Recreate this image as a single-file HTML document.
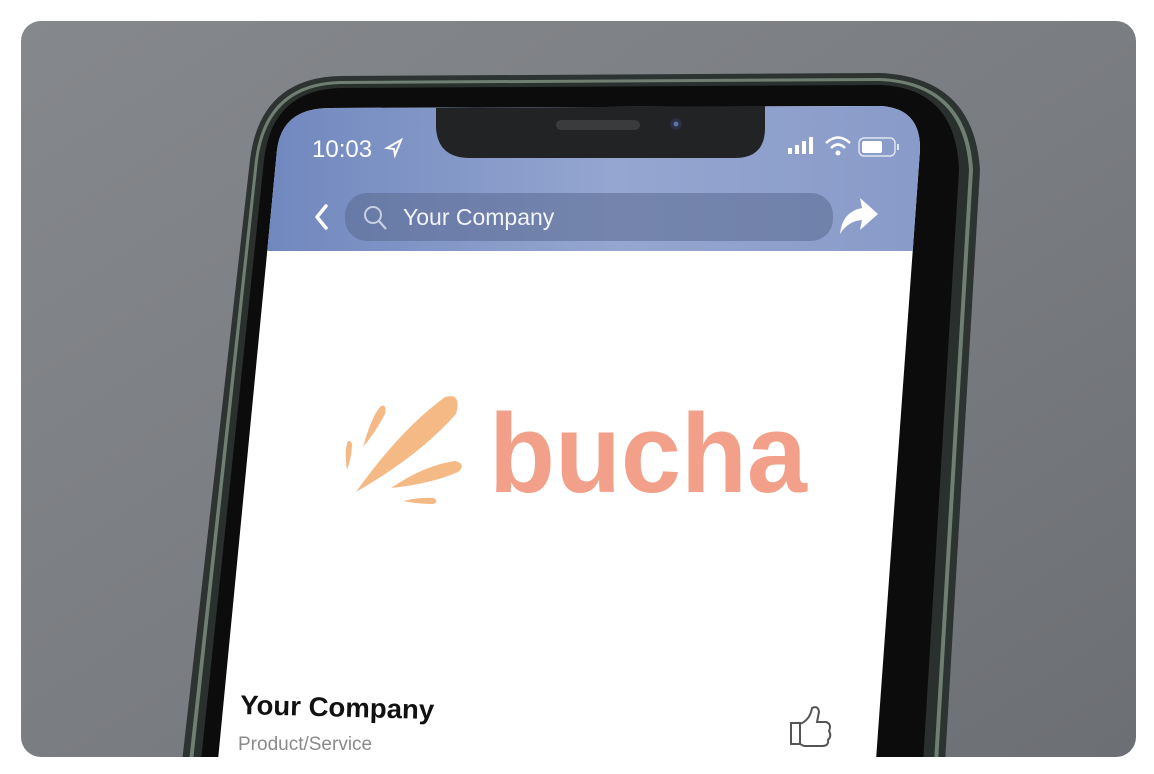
<!DOCTYPE html>
<html><head><style>
html,body{margin:0;padding:0;background:#fff;width:1154px;height:774px;overflow:hidden}
svg{display:block}
text{font-family:"Liberation Sans",sans-serif}
</style></head><body>
<svg width="1154" height="774" viewBox="0 0 1154 774">
<defs>
<linearGradient id="bg" x1="0" y1="0" x2="1" y2="1">
<stop offset="0" stop-color="#85888c"/><stop offset="0.5" stop-color="#7a7d81"/><stop offset="1" stop-color="#6c6f73"/>
</linearGradient>
<linearGradient id="blue" x1="0" y1="0" x2="1" y2="0">
<stop offset="0" stop-color="#6a82bb"/><stop offset="0.55" stop-color="#95a6d0"/><stop offset="1" stop-color="#8799c8"/>
</linearGradient>
<clipPath id="card"><rect x="21" y="21" width="1115" height="736" rx="20"/></clipPath>
<clipPath id="scr"><path d="M277,150 Q282,108 330,108 L880,106 Q921,108 920,150 L876,760 L218,760 Z"/></clipPath>
</defs>
<rect x="21" y="21" width="1115" height="736" rx="20" fill="url(#bg)"/>
<g clip-path="url(#card)">
<!-- phone frame -->
<path d="M250,160 Q260,78 340,76 L880,73 Q974,77 980,170 L944,780 L180,780 Z" fill="#2c3330"/>
<path d="M255,160 Q265,83 340,81 L880,78 Q968,82 973,170 L937,780 L187,780 Z" fill="#6f7f72"/>
<path d="M258,160 Q268,86 340,84 L880,81 Q964,85 969,170 L933,780 L191,780 Z" fill="#2a302d"/>
<path d="M264,160 Q272,90 340,88 L880,85 Q956,88 959,170 L922,780 L199,780 Z" fill="#0c0c0c"/>
<g clip-path="url(#scr)">
<rect x="200" y="100" width="760" height="680" fill="#fff"/>
<rect x="200" y="100" width="760" height="151" fill="url(#blue)"/>
<rect x="345" y="193" width="488" height="48" rx="22" fill="#5a6a90" opacity="0.55"/>
</g>
<!-- notch -->
<path d="M436,108 L436,128 Q438,158 470,158 L735,158 Q765,158 765,128 L765,106 Z" fill="#222324"/>
<rect x="556" y="120" width="84" height="10" rx="5" fill="#3a3b3c"/>
<circle cx="676" cy="124" r="6" fill="#2b3040"/><circle cx="676" cy="124" r="2.5" fill="#5a70a8"/>
<!-- status -->
<text x="312" y="157" font-size="24" fill="#fff">10:03</text>
<path d="M387,148 L401,140 L395,155 L394,149 Z" fill="none" stroke="#fff" stroke-width="2"/>
<rect x="788" y="148" width="4" height="6" fill="#fff"/><rect x="795" y="145" width="4" height="9" fill="#fff"/><rect x="802" y="141" width="4" height="13" fill="#fff"/><rect x="809" y="137" width="4" height="17" fill="#fff"/>
<path d="M826,143 Q838,132 850,143" fill="none" stroke="#fff" stroke-width="2.5"/><path d="M831,148 Q838,141 845,148" fill="none" stroke="#fff" stroke-width="2.5"/><circle cx="838" cy="153" r="2.5" fill="#fff"/>
<rect x="859" y="138" width="36" height="18" rx="5" fill="none" stroke="#dfe4f0" stroke-width="1.5"/><rect x="862" y="141" width="20" height="12" rx="2" fill="#fff"/><rect x="897" y="144" width="2" height="6" fill="#dfe4f0"/>
<!-- nav -->
<path d="M326,206 L317,217 L326,228" fill="none" stroke="#fff" stroke-width="3.5" stroke-linecap="round" stroke-linejoin="round"/>
<circle cx="373" cy="215" r="8" fill="none" stroke="#c7cfe0" stroke-width="2"/><path d="M379,221 L386,229" stroke="#c7cfe0" stroke-width="2.2"/>
<text x="403" y="225" font-size="23" fill="#f2f4f8">Your Company</text>
<path d="M840,234 Q842,212 862,208 L860,198 L878,214 L860,230 L862,220 Q848,221 840,234 Z" fill="#fff"/>
<!-- logo -->
<g fill="#f5b985">
<path d="M356,492 Q400,430 445,397 Q462,392 456,414 Q420,455 356,492 Z"/>
<path d="M363,447 Q372,415 381,406 Q387,404 385,414 Q375,433 363,447 Z"/>
<path d="M347,470 Q344,450 348,441 Q352,440 352,446 Q351,460 347,470 Z"/>
<path d="M391,488 Q425,465 455,461 Q467,464 458,472 Q430,484 391,488 Z"/>
<path d="M403,501 Q420,497 434,498 Q439,502 433,504 Q418,504 403,501 Z"/>
</g>
<text x="489" y="492" font-size="112" font-weight="bold" fill="#f2a08a" textLength="318" lengthAdjust="spacingAndGlyphs">bucha</text>
<!-- bottom -->
<text x="240" y="714" font-size="27" font-weight="bold" fill="#111" transform="rotate(1.5 240 714)" textLength="194" lengthAdjust="spacingAndGlyphs">Your Company</text>
<text x="238" y="750" font-size="19" fill="#8a8a8a">Product/Service</text>
<path d="M791,723 L800,723 L800,744 L791,744 Z M800,724 Q810,720 812,708 Q818,705 819,712 L817,722 L826,722 Q832,724 829,731 Q832,736 828,740 Q829,746 822,746 L804,746 L800,744" fill="none" stroke="#555" stroke-width="2"/>
</g>
</svg>
</body></html>
